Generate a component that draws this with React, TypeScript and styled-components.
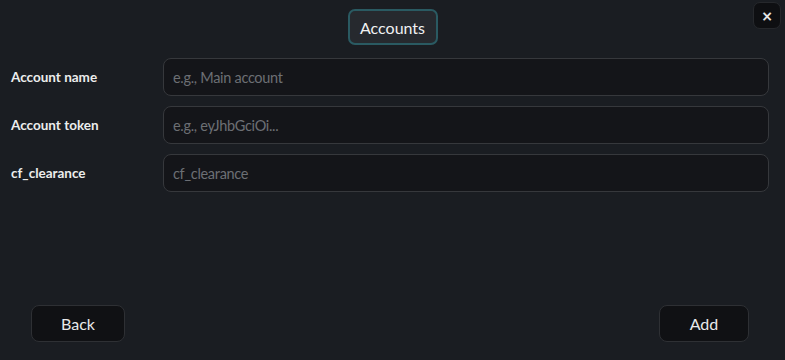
import React from 'react';
import styled, { createGlobalStyle } from 'styled-components';

const GlobalStyle = createGlobalStyle`
  html, body {
    margin: 0;
    padding: 0;
    background: #1a1d22;
  }
  body {
    font-family: Lato, "Noto Sans", sans-serif;
    color: #e8e9ea;
  }
`;

const Page = styled.div`
  position: relative;
  width: 785px;
  height: 360px;
  box-sizing: border-box;
  padding: 9px 16px 0 11px;
  display: flex;
  flex-direction: column;
  background: #1a1d22;
`;

const Header = styled.div`
  display: flex;
  justify-content: center;
  padding-left: 5px;
`;

const TitleButton = styled.button`
  height: 36px;
  width: 90px;
  padding: 0;
  border: 2px solid #2a5a62;
  border-radius: 7px;
  background: #26292e;
  color: #f0f1f2;
  font-family: inherit;
  font-size: 16px;
`;

const CloseButton = styled.button`
  position: absolute;
  top: 2px;
  right: 4px;
  width: 28px;
  height: 27px;
  padding: 0;
  border: 1px solid #26282c;
  border-radius: 7px;
  background: #0e0f12;
  color: #e6e6e6;
  font-family: "DejaVu Sans", sans-serif;
  font-size: 14px;
  font-weight: bold;
  line-height: 1;
`;

const Form = styled.div`
  display: flex;
  flex-direction: column;
  gap: 10px;
  margin-top: 13px;
`;

const Row = styled.label`
  display: grid;
  grid-template-columns: 152px 1fr;
  align-items: center;
`;

const Label = styled.span`
  font-size: 13.5px;
  font-weight: 700;
  color: #eceded;
`;

const Input = styled.input`
  height: 38px;
  box-sizing: border-box;
  padding: 0 9px;
  border: 1px solid #36383c;
  border-radius: 8px;
  background: #141519;
  color: #e6e6e6;
  font-family: inherit;
  font-size: 14.5px;
  letter-spacing: -0.3px;
  outline: none;

  &::placeholder {
    color: #6c6f74;
  }
`;

const Footer = styled.div`
  margin-top: auto;
  display: flex;
  justify-content: space-between;
  padding: 0 20px 18px 20px;
`;

const ActionButton = styled.button<{ $width: number }>`
  width: ${p => p.$width}px;
  height: 37px;
  border: 1px solid #2e3034;
  border-radius: 8px;
  background: #101114;
  color: #e8e9ea;
  font-family: inherit;
  font-size: 16px;
`;

const fields = [
  { label: 'Account name', placeholder: 'e.g., Main account' },
  { label: 'Account token', placeholder: 'e.g., eyJhbGciOi...' },
  { label: 'cf_clearance', placeholder: 'cf_clearance' },
];

const App = () => (
  <>
    <GlobalStyle />
    <Page>
      <Header>
        <TitleButton>Accounts</TitleButton>
      </Header>
      <CloseButton>×</CloseButton>
      <Form>
        {fields.map(f => (
          <Row key={f.label}>
            <Label>{f.label}</Label>
            <Input placeholder={f.placeholder} />
          </Row>
        ))}
      </Form>
      <Footer>
        <ActionButton $width={94}>Back</ActionButton>
        <ActionButton $width={90}>Add</ActionButton>
      </Footer>
    </Page>
  </>
);

export default App;
